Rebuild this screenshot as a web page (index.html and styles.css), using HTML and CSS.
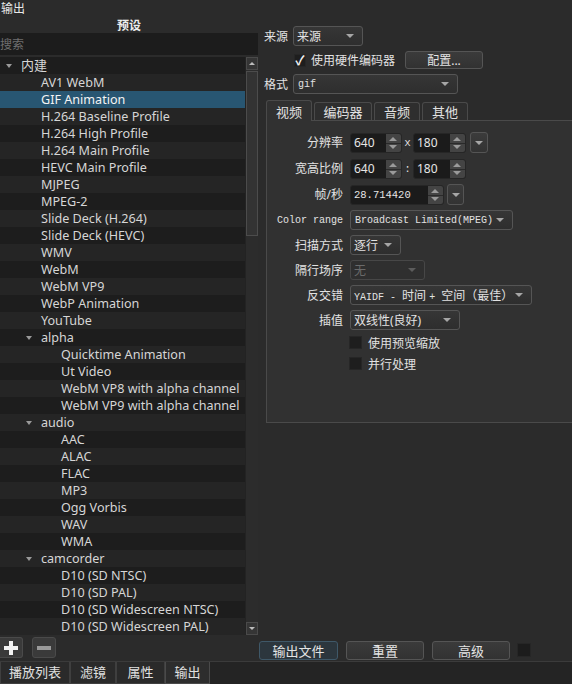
FILE: index.html
```html
<!DOCTYPE html>
<html lang="zh">
<head>
<meta charset="utf-8">
<title>输出</title>
<link rel="stylesheet" href="styles.css">
</head>
<body>
<div class="app">
  <div class="dock-title">输出</div>
  <div class="main">
    <div class="left">
      <div class="presets-title">预设</div>
      <div class="search">搜索</div>
      <div class="tree-wrap">
        <div class="tree">
          <div class="row l0"><span class="arrow"></span>内建</div>
          <div class="row l1">AV1 WebM</div>
          <div class="row l1 sel">GIF Animation</div>
          <div class="row l1">H.264 Baseline Profile</div>
          <div class="row l1">H.264 High Profile</div>
          <div class="row l1">H.264 Main Profile</div>
          <div class="row l1">HEVC Main Profile</div>
          <div class="row l1">MJPEG</div>
          <div class="row l1">MPEG-2</div>
          <div class="row l1">Slide Deck (H.264)</div>
          <div class="row l1">Slide Deck (HEVC)</div>
          <div class="row l1">WMV</div>
          <div class="row l1">WebM</div>
          <div class="row l1">WebM VP9</div>
          <div class="row l1">WebP Animation</div>
          <div class="row l1">YouTube</div>
          <div class="row l1g"><span class="arrow"></span>alpha</div>
          <div class="row l2">Quicktime Animation</div>
          <div class="row l2">Ut Video</div>
          <div class="row l2">WebM VP8 with alpha channel</div>
          <div class="row l2">WebM VP9 with alpha channel</div>
          <div class="row l1g"><span class="arrow"></span>audio</div>
          <div class="row l2">AAC</div>
          <div class="row l2">ALAC</div>
          <div class="row l2">FLAC</div>
          <div class="row l2">MP3</div>
          <div class="row l2">Ogg Vorbis</div>
          <div class="row l2">WAV</div>
          <div class="row l2">WMA</div>
          <div class="row l1g"><span class="arrow"></span>camcorder</div>
          <div class="row l2">D10 (SD NTSC)</div>
          <div class="row l2">D10 (SD PAL)</div>
          <div class="row l2">D10 (SD Widescreen NTSC)</div>
          <div class="row l2">D10 (SD Widescreen PAL)</div>
        </div>
        <div class="vscroll">
          <div class="sb-btn"><span class="tri-up"></span></div>
          <div class="sb-thumb"></div>
          <div class="sb-track"></div>
          <div class="sb-btn"><span class="tri-down"></span></div>
        </div>
      </div>
      <div class="pm">
        <div class="pm-btn">
          <svg width="14" height="14" viewBox="0 0 14 14"><rect x="5" y="0" width="4" height="14" fill="#f2f2f2"/><rect x="0" y="5" width="14" height="4" fill="#f2f2f2"/></svg>
        </div>
        <div class="pm-btn">
          <svg width="14" height="14" viewBox="0 0 14 14"><rect x="0" y="5" width="14" height="4" fill="#9a9a9a"/></svg>
        </div>
      </div>
    </div>

    <div class="right">
      <div class="top-row">
        <span class="top-label">来源</span>
        <div class="combo w-src"><span>来源</span><span class="dd"></span></div>
      </div>
      <div class="hw-row">
        <span class="check checked">✓</span>
        <span class="hw-text">使用硬件编码器</span>
        <div class="btn cfg">配置...</div>
      </div>
      <div class="top-row">
        <span class="top-label">格式</span>
        <div class="combo w-fmt mono"><span>gif</span><span class="dd"></span></div>
      </div>

      <div class="tabwidget">
        <div class="tabbar">
          <div class="tab active">视频</div>
          <div class="tab w-enc">编码器</div>
          <div class="tab">音频</div>
          <div class="tab">其他</div>
        </div>
        <div class="tabpanel">
          <div class="form">
            <div class="flabel">分辨率</div>
            <div class="field">
              <div class="spin w52"><span class="spin-val">640</span><span class="spin-btns"></span></div>
              <span class="sep">x</span>
              <div class="spin w53"><span class="spin-val">180</span><span class="spin-btns"></span></div>
              <div class="ddbtn"><span class="dd"></span></div>
            </div>

            <div class="flabel">宽高比例</div>
            <div class="field">
              <div class="spin w52"><span class="spin-val">640</span><span class="spin-btns"></span></div>
              <span class="sep">:</span>
              <div class="spin w53"><span class="spin-val">180</span><span class="spin-btns"></span></div>
            </div>

            <div class="flabel">帧/秒</div>
            <div class="field">
              <div class="spin w94"><span class="spin-val mono">28.714420</span><span class="spin-btns"></span></div>
              <div class="ddbtn fps"><span class="dd"></span></div>
            </div>

            <div class="flabel mono">Color range</div>
            <div class="field c">
              <div class="combo w-cr mono"><span>Broadcast Limited(MPEG)</span><span class="dd"></span></div>
            </div>

            <div class="flabel">扫描方式</div>
            <div class="field c">
              <div class="combo w-scan"><span>逐行</span><span class="dd"></span></div>
            </div>

            <div class="flabel">隔行场序</div>
            <div class="field c">
              <div class="combo w-field disabled"><span>无</span><span class="dd"></span></div>
            </div>

            <div class="flabel">反交错</div>
            <div class="field c">
              <div class="combo w-deint"><span><span class="mono">YAIDF - </span>时间 <span class="mono">+ </span>空间（最佳）</span><span class="dd"></span></div>
            </div>

            <div class="flabel">插值</div>
            <div class="field c">
              <div class="combo w-interp"><span>双线性(良好)</span><span class="dd"></span></div>
            </div>
          </div>
          <div class="checks">
            <div class="crow"><span class="check"></span><span>使用预览缩放</span></div>
            <div class="crow"><span class="check"></span><span>并行处理</span></div>
          </div>
        </div>
      </div>

      <div class="actions">
        <div class="btn act primary">输出文件</div>
        <div class="btn act">重置</div>
        <div class="btn act">高级</div>
        <span class="square"></span>
      </div>
    </div>
  </div>
  <div class="bottom-tabs">
    <div class="btab w70">播放列表</div>
    <div class="btab w46">滤镜</div>
    <div class="btab w48">属性</div>
    <div class="btab w45 cur">输出</div>
  </div>
</div>
</body>
</html>
```

FILE: styles.css
```css
* { box-sizing: border-box; }
html, body { margin: 0; padding: 0; }
body {
  width: 572px;
  height: 684px;
  overflow: hidden;
  background: #2b2b2b;
  color: #dcdcdc;
  font-family: "Noto Sans", "Noto Sans CJK SC", sans-serif;
  font-size: 12px;
}
.mono { font-family: "Liberation Mono", "Noto Sans CJK SC", monospace; font-size: 10px; }

.app { display: flex; flex-direction: column; height: 684px; }
.dock-title { height: 17px; line-height: 17px; padding-left: 1px; color: #e8e8e8; }
.main { display: flex; height: 644px; }

/* left */
.left { width: 258px; display: flex; flex-direction: column; }
.presets-title { height: 16px; line-height: 18px; text-align: center; font-weight: bold; color: #ececec; }
.search { height: 22px; line-height: 24px; background: #1c1c1c; color: #6f6f6f; padding-left: 0; }
.tree-wrap { margin-top: 2px; height: 578px; display: flex; }
.tree { width: 245px; overflow: hidden; }
.row {
  height: 17px;
  line-height: 17px;
  font-size: 12.6px;
  white-space: nowrap;
  color: #d6d6d6;
  display: flex;
  align-items: center;
}
.row:nth-child(odd) { background: #1d1d1d; }
.row:nth-child(even) { background: #252525; }
.row.sel { background: #285672; color: #f4f4f4; }
.l0 { padding-left: 5px; font-size: 13px; }
.l1 { padding-left: 41px; }
.l1g { padding-left: 25px; }
.l2 { padding-left: 61px; }
.arrow { width: 16px; height: 17px; position: relative; flex: none; }
.arrow::before {
  content: "";
  position: absolute;
  left: 1px; top: 7px;
  border-left: 3px solid transparent;
  border-right: 3px solid transparent;
  border-top: 4px solid #9a9a9a;
}

.vscroll {
  width: 13px;
  display: flex;
  flex-direction: column;
  background: #2c2c2c;
  border-left: 1px solid #232323;
}
.sb-btn {
  height: 13px;
  border: 1px solid #4a4a4a;
  background: #353535;
  display: flex;
  align-items: center;
  justify-content: center;
  flex: none;
}
.tri-up { border-left: 3px solid transparent; border-right: 3px solid transparent; border-bottom: 3px solid #bdbdbd; }
.tri-down { border-left: 3px solid transparent; border-right: 3px solid transparent; border-top: 3px solid #bdbdbd; }
.sb-thumb { height: 165px; margin-top: 1px; border: 1px solid #4c4c4c; background: #333333; flex: none; }
.sb-track { flex: 1; }

.pm { height: 26px; display: flex; gap: 9px; padding-top: 2px; }
.pm-btn {
  width: 24px; height: 21px;
  background: #3a3a3a;
  border: 1px solid #4a4a4a;
  border-radius: 3px;
  display: flex; align-items: center; justify-content: center;
}
.pm-btn:first-child { width: 23px; border-left: none; border-radius: 0 3px 3px 0; }

/* right */
.right {
  width: 314px;
  display: flex;
  flex-direction: column;
  padding-top: 9px;
  padding-left: 6px;
  overflow: hidden;
}
.top-row { display: flex; align-items: center; height: 20px; }
.top-label { width: 29px; color: #e2e2e2; }
.hw-row { display: flex; align-items: center; height: 18px; margin: 5px 0; padding-left: 30px; }
.hw-text { margin-left: 5px; color: #e2e2e2; }
.btn {
  height: 18px;
  display: flex; align-items: center; justify-content: center;
  background: linear-gradient(#3b3b3b, #323232);
  border: 1px solid #555555;
  border-radius: 3px;
  color: #e4e4e4;
}
.cfg { width: 78px; margin-left: 10px; }

.combo {
  height: 20px;
  display: flex; align-items: center; justify-content: space-between;
  padding: 0 8px 0 3px;
  background: linear-gradient(#363636, #2e2e2e);
  border: 1px solid #555555;
  border-radius: 3px;
  color: #e2e2e2;
  white-space: nowrap;
}
.combo.mono { padding-left: 4px; }
.dd {
  width: 0; height: 0;
  border-left: 4px solid transparent;
  border-right: 4px solid transparent;
  border-top: 4px solid #a6a6a6;
  flex: none;
}
.w-src { width: 70px; }
.w-fmt { width: 165px; }

.tabwidget { margin-top: 6px; margin-left: 2px; margin-right: -6px; }
.tabbar { height: 20px; display: flex; align-items: flex-end; gap: 2px; }
.tab {
  height: 18px;
  width: 46px;
  display: flex; align-items: center; justify-content: center;
  border: 1px solid #4a4a4a;
  border-bottom: none;
  border-radius: 3px 3px 0 0;
  background: #2e2e2e;
  color: #e2e2e2;
  font-size: 13px;
}
.tab.w-enc { width: 58px; }
.tab.active { height: 21px; margin-bottom: -1px; background: #313131; position: relative; z-index: 1; }
.tabpanel {
  height: 303px;
  border: 1px solid #4a4a4a;
  background: #313131;
  padding: 11px 0 0 4px;
}
.form {
  display: grid;
  grid-template-columns: 72px auto;
  column-gap: 7px;
  row-gap: 5px;
  grid-template-rows: 21px 21px 21px 20px 20px 20px 20px 20px;
}
.flabel { text-align: right; line-height: 22px; color: #e2e2e2; white-space: nowrap; font-size: 12px; }
.flabel.mono { font-size: 10px; }
.field { display: flex; align-items: center; }
.spin {
  height: 20px;
  display: flex;
  border-radius: 3px;
  overflow: hidden;
  background: #1b1b1b;
  border: 1px solid #262626;
}
.w52 { width: 52px; }
.w53 { width: 53px; }
.w94 { width: 94px; }
.spin-val { flex: 1; padding-left: 3px; line-height: 18px; color: #e6e6e6; }
.spin-val.mono { padding-left: 3px; font-size: 10.5px; }
.spin-btns {
  width: 15px;
  background:
    linear-gradient(#2a2a2a, #2a2a2a) 0 9px / 100% 1px no-repeat,
    #444444;
  position: relative;
}
.spin-btns::before, .spin-btns::after {
  content: "";
  position: absolute;
  left: 3px;
  border-left: 4px solid transparent;
  border-right: 4px solid transparent;
}
.spin-btns::before { top: 3px; border-bottom: 4px solid #9a9a9a; }
.spin-btns::after { top: 11px; border-top: 4px solid #9a9a9a; }
.sep { width: 11px; text-align: center; font-family: "Liberation Mono", monospace; font-size: 11px; color: #dcdcdc; }
.ddbtn {
  width: 18px; height: 21px;
  margin-left: 4px;
  background: linear-gradient(#3b3b3b, #333333);
  border: 1px solid #555555;
  border-radius: 3px;
  display: flex; align-items: center; justify-content: center;
}
.ddbtn .dd { border-left-width: 4px; border-right-width: 4px; }
.ddbtn.fps { width: 17px; margin-left: 3px; }
.w-cr { width: 163px; }
.w-scan { width: 51px; }
.w-field { width: 75px; }
.w-field.disabled { color: #6a6a6a; background: #2f2f2f; border-color: #474747; }
.w-field.disabled .dd { border-top-color: #5c5c5c; }
.w-deint { width: 182px; }
.w-deint .mono { font-size: 10px; }
.w-interp { width: 110px; }

.checks { margin-top: 4px; padding-left: 78px; display: flex; flex-direction: column; gap: 4px; }
.crow { height: 17px; display: flex; align-items: center; gap: 6px; color: #e2e2e2; }
.check {
  width: 13px; height: 13px;
  background: #1e1e1e;
  border: 1px solid #262626;
  flex: none;
  display: inline-flex; align-items: center; justify-content: center;
  color: #f0f0f0;
  font-size: 13px;
  line-height: 13px;
}
.check.checked { width: 12px; font-weight: bold; }

.actions { margin-top: auto; margin-left: -5px; height: 20px; margin-bottom: 1px; display: flex; align-items: center; gap: 8px; }
.act { width: 78px; height: 19px; font-size: 13px; }
.act.primary { width: 79px; background: #2c363d; border-color: #3f5868; }
.square { width: 14px; height: 14px; background: #1c1c1c; border: 1px solid #262626; margin-left: -1px; }

/* bottom */
.bottom-tabs {
  height: 23px;
  display: flex;
  border-top: 1px solid #3b3b3b;
  background: #242424;
}
.btab {
  height: 22px;
  display: flex; align-items: center; justify-content: center;
  padding-bottom: 3px;
  border: 1px solid #3f3f3f;
  border-top: none;
  background: #2a2a2a;
  font-size: 13px;
  color: #e0e0e0;
}
.w70 { width: 70px; }
.w46 { width: 46px; }
.w48 { width: 49px; }
.w45 { width: 45px; }
.btab.cur { background: #2d2d2d; border-color: #4a4a4a; }
```
